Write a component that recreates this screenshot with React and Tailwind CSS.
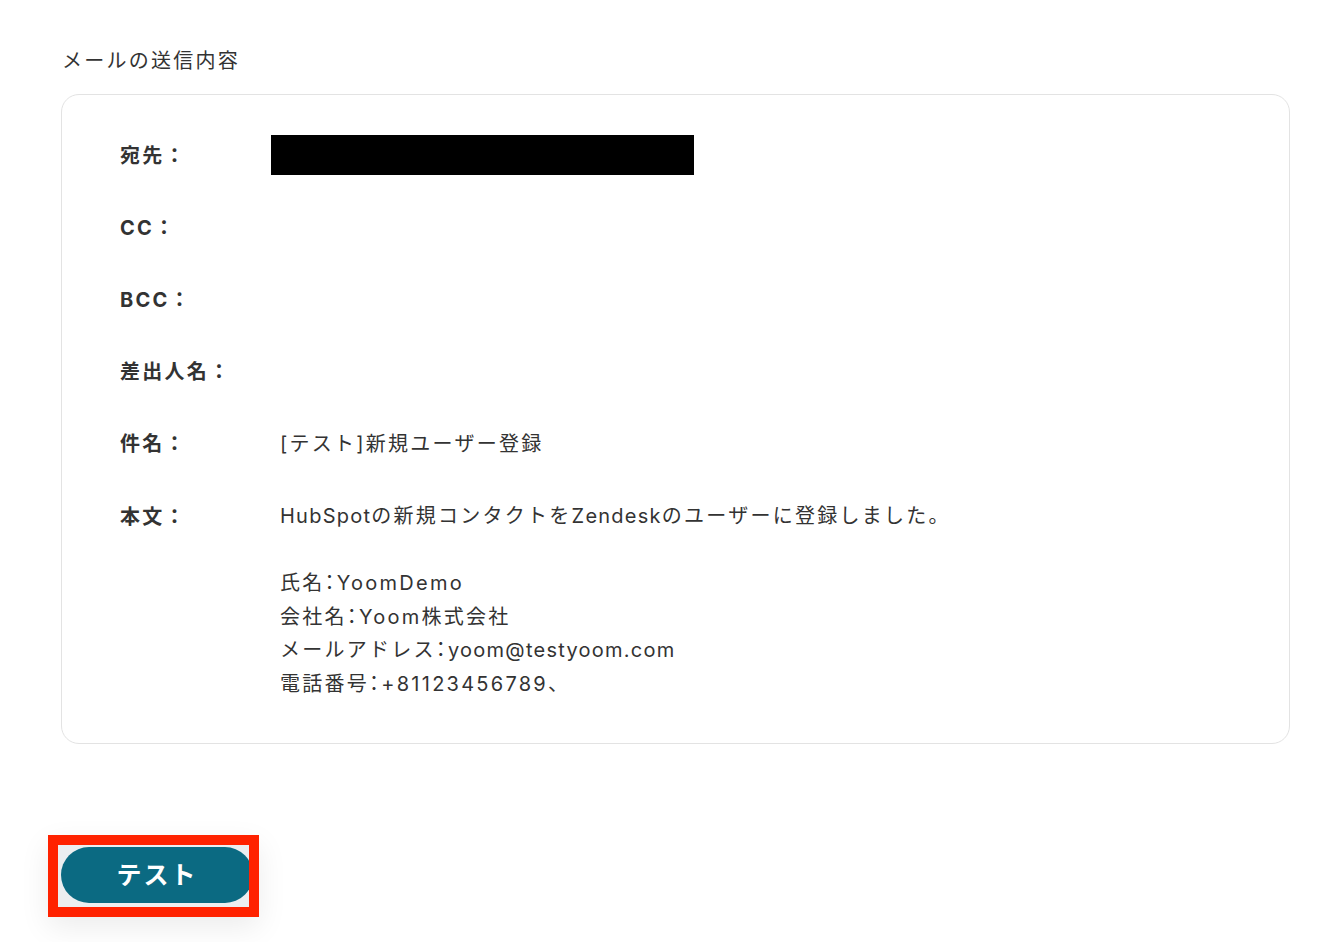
export default function App() {
  const font = { fontFamily: 'Inter, "Noto Sans CJK JP", "Noto Sans", sans-serif' };
  const C = () => <span className="[font-feature-settings:'halt']">：</span>;
  const L = ({ children }) => <span className="tracking-[1.25px]">{children}</span>;
  const rows = [
    { label: "宛先：", value: <div className="-ml-[9px] mb-[2px] h-[40px] w-[423px] bg-black" /> },
    { label: "CC：", value: null },
    { label: "BCC：", value: null },
    { label: "差出人名：", value: null },
    { label: "件名：", value: <span>[テスト]新規ユーザー登録</span> },
  ];
  return (
    <div className="min-h-[942px] w-[1336px] bg-white text-[#333333] tracking-[2.25px]" style={font}>
      <div className="pl-[62px] pr-[46px] pt-[45px]">
        <div className="text-[20px] leading-[32px]">メールの送信内容</div>
        <div className="-ml-[1px] mt-[17px] rounded-[18px] border border-[#e3e3e3] pl-[58px] pt-[25px] pb-[41px]">
          {rows.map((r) => (
            <div key={r.label} className="flex h-[72px] items-center">
              <div className="w-[160px] text-[20px] font-bold">{r.label}</div>
              <div className="flex items-center text-[20px]">{r.value}</div>
            </div>
          ))}
          <div className="flex pt-[20px]">
            <div className="w-[160px] text-[20px] font-bold leading-[34px]">本文：</div>
            <div className="text-[20px] leading-[33.6px]">
              <div><L>HubSpot</L>の新規コンタクトを<L>Zendesk</L>のユーザーに登録しました。</div>
              <div>&nbsp;</div>
              <div>氏名<C />YoomDemo</div>
              <div>会社名<C />Yoom株式会社</div>
              <div>メールアドレス<C /><L>yoom@testyoom.com</L></div>
              <div>電話番号<C />+81123456789、</div>
            </div>
          </div>
        </div>
      </div>
      <div className="ml-[48px] mt-[91px] h-[82px] w-[211px] overflow-hidden border-[10px] border-[#ff2200] bg-[#eceef0] shadow-[0_10px_30px_rgba(0,0,0,0.08)]">
        <div className="ml-[3px] mt-[2px] flex h-[56px] w-[192px] items-center justify-center rounded-full bg-[#0b6a82] pt-[3px] text-[25px] font-bold tracking-[2px] text-white">
          テスト
        </div>
      </div>
    </div>
  );
}
